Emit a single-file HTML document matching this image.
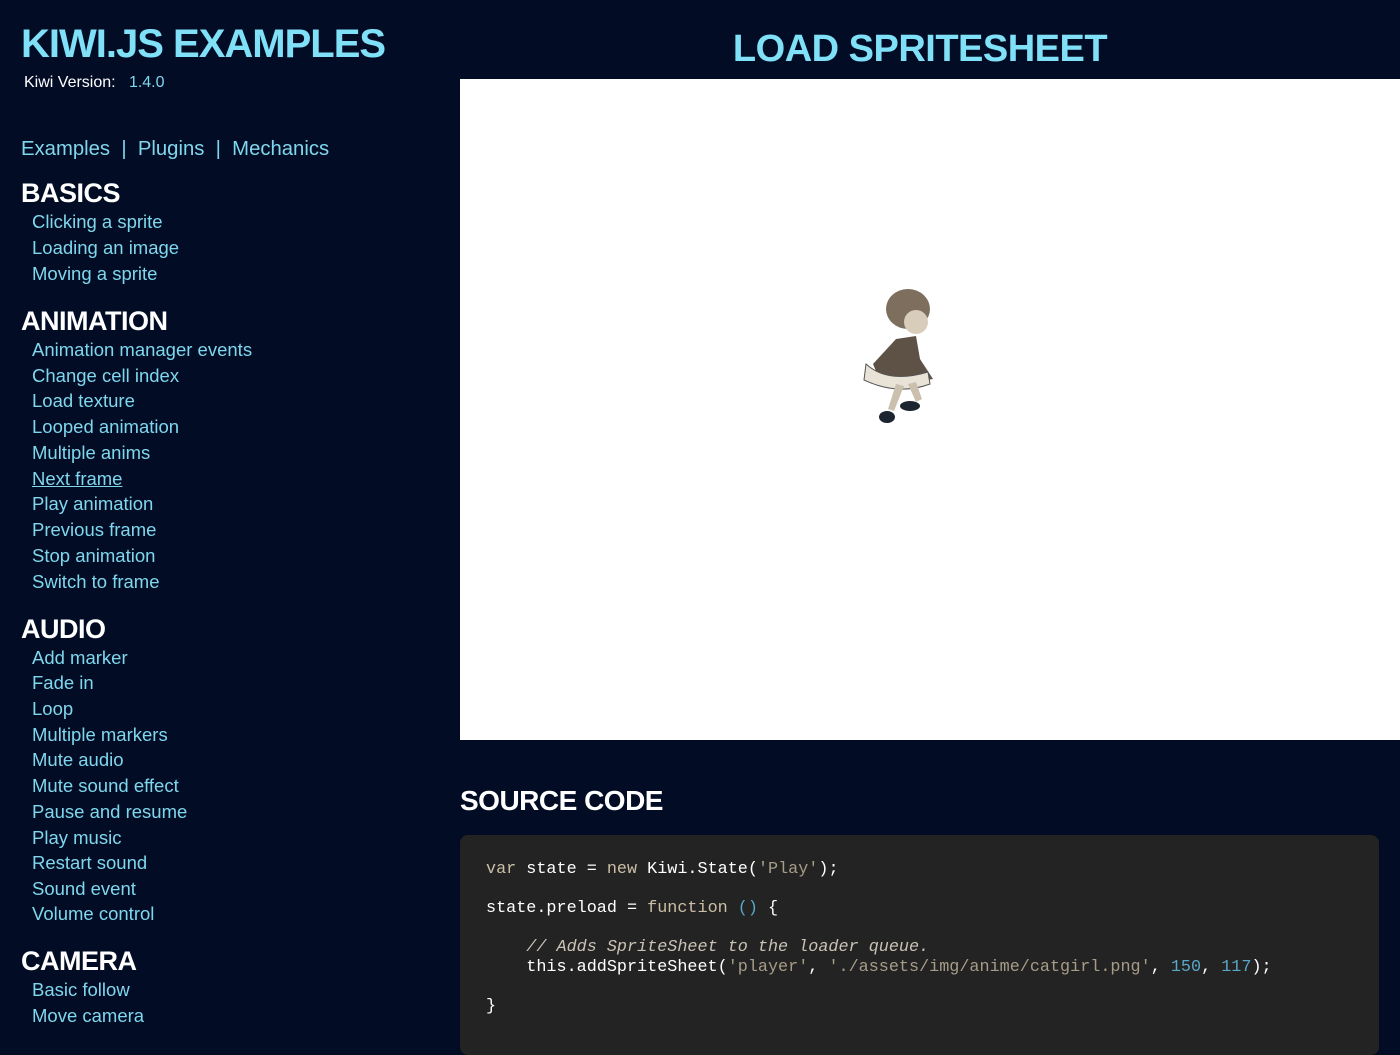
<!DOCTYPE html>
<html><head><meta charset="utf-8"><style>
*{margin:0;padding:0;box-sizing:border-box}
body{width:1400px;height:1035px;overflow:hidden;background:#020d25;font-family:"Liberation Sans",Arial,sans-serif;position:relative}
.t{position:absolute;color:#7fe0f8;font-weight:bold}
.h{position:absolute;left:21px;color:#fff;font-weight:bold;font-size:27px;letter-spacing:-0.5px}
.l{position:absolute;left:32px;font-size:18.5px;color:#7fd7ee;white-space:nowrap}
.code{position:absolute;left:460px;top:835px;width:919px;height:220px;background:#232323;border-radius:8px;font-family:"Liberation Mono",monospace;font-size:16.8px;color:#fff;padding:25px 0 0 26px;line-height:19.5px;white-space:pre}
.k{color:#cbbfa6}.s{color:#a79c88}.n{color:#59a7c8}.c{color:#c9c2b6;font-style:italic}
</style></head><body>
<div class="t" style="left:21px;top:22px;font-size:40px;letter-spacing:-1px">KIWI.JS EXAMPLES</div>
<div style="position:absolute;left:24px;top:74px;font-size:16px;color:#fff">Kiwi Version:&nbsp;&nbsp; <span style="color:#7fd7ee">1.4.0</span></div>
<div style="position:absolute;left:21px;top:138px;font-size:20.3px;color:#7fd7ee">Examples &nbsp;|&nbsp; Plugins &nbsp;|&nbsp; Mechanics</div>
<div class="h" style="top:178px">BASICS</div>
<div class="l" style="top:211px">Clicking a sprite</div>
<div class="l" style="top:237px">Loading an image</div>
<div class="l" style="top:263px">Moving a sprite</div>
<div class="h" style="top:306px">ANIMATION</div>
<div class="l" style="top:339px">Animation manager events</div>
<div class="l" style="top:365px">Change cell index</div>
<div class="l" style="top:390px">Load texture</div>
<div class="l" style="top:416px">Looped animation</div>
<div class="l" style="top:442px">Multiple anims</div>
<div class="l" style="top:468px;text-decoration:underline">Next frame</div>
<div class="l" style="top:493px">Play animation</div>
<div class="l" style="top:519px">Previous frame</div>
<div class="l" style="top:545px">Stop animation</div>
<div class="l" style="top:571px">Switch to frame</div>
<div class="h" style="top:614px">AUDIO</div>
<div class="l" style="top:647px">Add marker</div>
<div class="l" style="top:672px">Fade in</div>
<div class="l" style="top:698px">Loop</div>
<div class="l" style="top:724px">Multiple markers</div>
<div class="l" style="top:749px">Mute audio</div>
<div class="l" style="top:775px">Mute sound effect</div>
<div class="l" style="top:801px">Pause and resume</div>
<div class="l" style="top:827px">Play music</div>
<div class="l" style="top:852px">Restart sound</div>
<div class="l" style="top:878px">Sound event</div>
<div class="l" style="top:903px">Volume control</div>
<div class="h" style="top:946px">CAMERA</div>
<div class="l" style="top:979px">Basic follow</div>
<div class="l" style="top:1005px">Move camera</div>

<div class="t" style="left:460px;width:920px;text-align:center;top:28px;font-size:38px;letter-spacing:-0.5px">LOAD SPRITESHEET</div>
<div style="position:absolute;left:460px;top:79px;width:940px;height:661px;background:#fff">
<svg style="position:absolute;left:398px;top:205px" width="80" height="142" viewBox="0 0 80 142">
<ellipse cx="50" cy="25" rx="22" ry="20" fill="#7d6e5e"/>
<ellipse cx="58" cy="38" rx="12" ry="12" fill="#d8cdbb"/>
<path d="M38 55 L58 52 L62 75 L75 95 L45 100 L20 92 L15 80 Z" fill="#5e5246"/>
<path d="M8 80 Q30 100 70 88 L72 100 Q40 112 6 96 Z" fill="#e9e2d6" stroke="#555" stroke-width="1"/>
<path d="M38 100 L30 125 L36 127 L46 102 Z M50 100 L58 118 L64 115 L58 98 Z" fill="#cbbfae"/>
<ellipse cx="29" cy="133" rx="8" ry="6" fill="#1c2530"/>
<ellipse cx="52" cy="122" rx="10" ry="5" fill="#1c2530"/>
</svg>
</div>

<div style="position:absolute;left:460px;top:785px;color:#fff;font-weight:bold;font-size:28px;letter-spacing:-0.5px">SOURCE CODE</div>
<div class="code"><span class="k">var</span> state = <span class="k">new</span> Kiwi.State(<span class="s">'Play'</span>);

state.preload = <span class="k">function</span> <span class="n">()</span> {

    <span class="c">// Adds SpriteSheet to the loader queue.</span>
    this.addSpriteSheet(<span class="s">'player'</span>, <span class="s">'./assets/img/anime/catgirl.png'</span>, <span class="n">150</span>, <span class="n">117</span>);

}</div>
</body></html>
